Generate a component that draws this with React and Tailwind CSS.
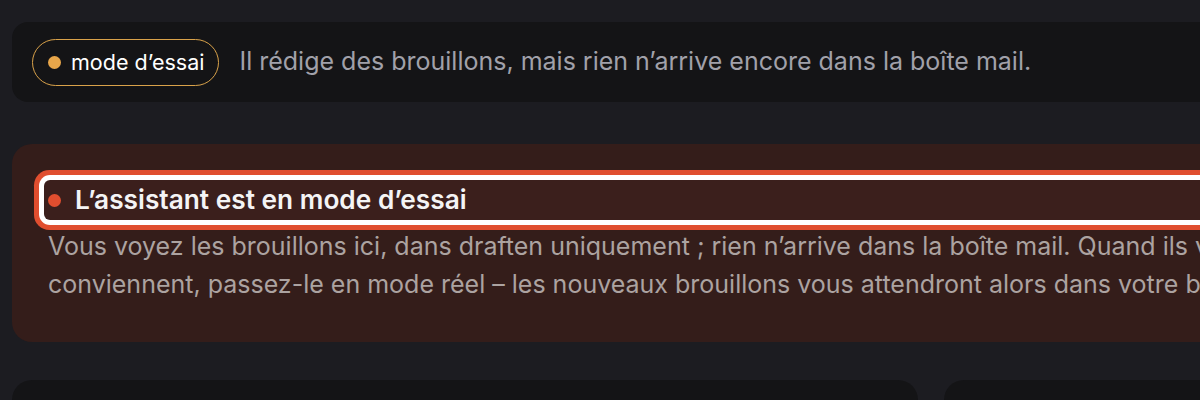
import React from "react";

function App() {
  return (
    <div
      className="h-[400px] w-[1200px] overflow-hidden bg-[#1c1c21] text-white"
      style={{ fontFamily: "Inter, 'Noto Sans', sans-serif" }}
    >
      <div className="w-[1500px] px-3 pt-[22px]">
        {/* Mode banner */}
        <div className="flex h-[80px] items-center gap-[20px] rounded-2xl bg-[#141416] px-5">
          <span className="flex h-[47px] items-center gap-[10px] rounded-full border-[1.5px] border-[#d9a24a] pl-[15px] pr-[14px] text-[21.5px] text-white">
            <span className="h-[13px] w-[13px] rounded-full bg-[#e8a64a]" />
            mode d’essai
          </span>
          <p className="text-[25px] text-[#a1a1aa]">
            Il rédige des brouillons, mais rien n’arrive encore dans la boîte mail.
          </p>
        </div>

        {/* Test mode notice */}
        <div className="mt-[42px] h-[198px] rounded-[20px] bg-[#341d1a] pl-8 pt-9">
          <h2
            tabIndex={0}
            className="flex h-[40px] items-center gap-[14px] rounded-md bg-[#3b1f1c] pl-1 text-[26.25px] font-semibold text-[#f4f4f5] shadow-[0_0_0_5px_#ffffff,0_0_0_10px_#e04e2f]"
          >
            <span className="h-[13px] w-[13px] rounded-full bg-[#e04e2f]" />
            L’assistant est en mode d’essai
          </h2>
          <p className="mt-[7px] pl-1 text-[25px] leading-[38px] text-[#aca3a1]">
            Vous voyez les brouillons ici, dans draften uniquement ; rien n’arrive dans la boîte mail. Quand ils vous
            <br />
            conviennent, passez-le en mode réel – les nouveaux brouillons vous attendront alors dans votre boîte mail.
          </p>
        </div>

        {/* Lower cards */}
        <div className="mt-[38px] flex gap-[26px]">
          <div className="h-[200px] w-[906px] rounded-[20px] bg-[#141416]" />
          <div className="h-[200px] w-[540px] rounded-[20px] bg-[#141416]" />
        </div>
      </div>
    </div>
  );
}

export default App;
